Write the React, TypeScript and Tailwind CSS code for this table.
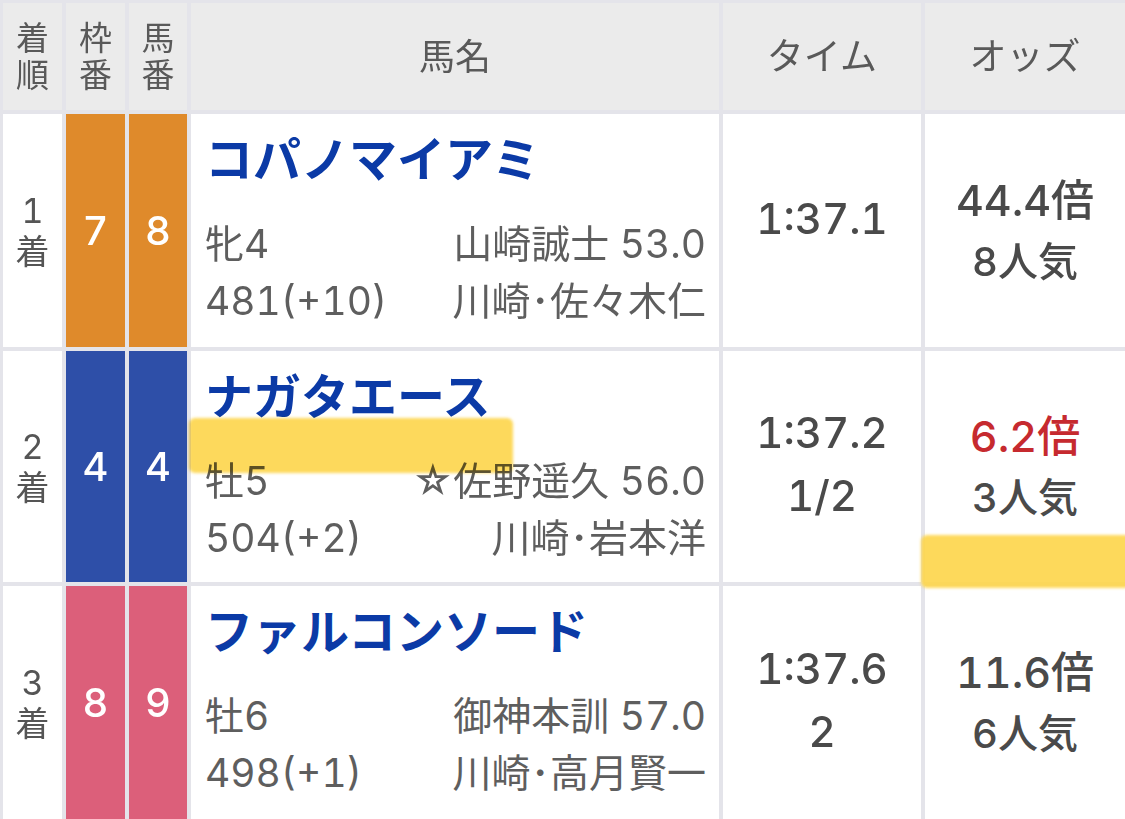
const rows = [
  {
    rank: "1",
    waku: "7",
    uma: "8",
    color: "bg-[#df8a2b]",
    name: "コパノマイアミ",
    sex: "牝4",
    jockey: "山崎誠士 53.0",
    weight: "481(+10)",
    trainer: "川崎･佐々木仁",
    time: "1:37.1",
    margin: "",
    odds: "44.4倍",
    pop: "8人気",
    fav: false,
    h: "h-[233px]",
  },
  {
    rank: "2",
    waku: "4",
    uma: "4",
    color: "bg-[#2e4fa8]",
    name: "ナガタエース",
    sex: "牡5",
    jockey: "☆佐野遥久 56.0",
    weight: "504(+2)",
    trainer: "川崎･岩本洋",
    time: "1:37.2",
    margin: "1/2",
    odds: "6.2倍",
    pop: "3人気",
    fav: true,
    h: "h-[231px]",
  },
  {
    rank: "3",
    waku: "8",
    uma: "9",
    color: "bg-[#dc5f7a]",
    name: "ファルコンソード",
    sex: "牡6",
    jockey: "御神本訓 57.0",
    weight: "498(+1)",
    trainer: "川崎･高月賢一",
    time: "1:37.6",
    margin: "2",
    odds: "11.6倍",
    pop: "6人気",
    fav: false,
    h: "h-[233px]",
  },
];

const font = "font-['Inter','Noto_Sans_CJK_JP',sans-serif] tabular-nums";

export default function App() {
  return (
    <div className={`w-[1125px] h-[819px] overflow-hidden bg-[#e4e4ea] pt-[3px] pl-[3px] ${font}`}>
      <div className="grid grid-cols-[59px_59px_58px_528px_198px_1fr] gap-[4px]">
        {/* ヘッダー */}
        <div className="h-[107px] bg-[#ebebeb] flex flex-col items-center justify-center text-[33px] leading-[37px] text-[#595959]">
          <span>着</span>
          <span>順</span>
        </div>
        <div className="h-[107px] bg-[#ebebeb] flex flex-col items-center justify-center text-[33px] leading-[37px] text-[#595959]">
          <span>枠</span>
          <span>番</span>
        </div>
        <div className="h-[107px] bg-[#ebebeb] flex flex-col items-center justify-center text-[33px] leading-[37px] text-[#595959]">
          <span>馬</span>
          <span>番</span>
        </div>
        <div className="h-[107px] bg-[#ebebeb] flex items-center justify-center text-[36px] text-[#595959]">馬名</div>
        <div className="h-[107px] bg-[#ebebeb] flex items-center justify-center text-[37px] text-[#595959]">タイム</div>
        <div className="h-[107px] bg-[#ebebeb] flex items-center justify-center text-[37px] text-[#595959]">オッズ</div>

        {rows.map((r) => (
          <Row key={r.rank} r={r} />
        ))}
      </div>
    </div>
  );
}

function Row({ r }: { r: (typeof rows)[number] }) {
  return (
    <>
      {/* 着順 */}
      <div className={`${r.h} bg-white flex flex-col items-center justify-center text-[34px] leading-[41px] text-[#555]`}>
        <span>{r.rank}</span>
        <span>着</span>
      </div>
      {/* 枠番・馬番 */}
      <div className={`${r.h} ${r.color} flex items-center justify-center text-[40px] font-medium text-white`}>{r.waku}</div>
      <div className={`${r.h} ${r.color} flex items-center justify-center text-[40px] font-medium text-white`}>{r.uma}</div>

      {/* 馬名 */}
      <div className={`${r.h} bg-white relative pt-[18px] pl-[14px] pr-[13px]`}>
        <div className="text-[48px] leading-[56px] font-bold text-[#0b3aa6] whitespace-nowrap">{r.name}</div>
        <div className="mt-[27px] flex justify-between text-[39px] leading-[57px] text-[#5e5e5e] whitespace-nowrap">
          <span>{r.sex}</span>
          <span>{r.jockey}</span>
        </div>
        <div className="flex justify-between text-[39px] leading-[57px] text-[#5e5e5e] whitespace-nowrap">
          <span>{r.weight}</span>
          <span>{r.trainer}</span>
        </div>
        {r.fav && (
          <div className="absolute left-[-2px] top-[67px] w-[324px] h-[55px] rounded-[6px] bg-[#fdd54a] opacity-90 blur-[1.5px] mix-blend-multiply" />
        )}
      </div>

      {/* タイム */}
      <div
        className={`${r.h} bg-white flex flex-col items-center justify-center text-[42px] leading-[63px] font-medium text-[#4a4a4a] ${
          r.margin ? "pb-[6px]" : "pb-[24px]"
        }`}
      >
        <span>{r.time}</span>
        {r.margin && <span>{r.margin}</span>}
      </div>

      {/* オッズ */}
      <div className={`${r.h} bg-white relative flex flex-col items-center justify-center leading-[62px] font-medium`}>
        <span className={`text-[43px] ${r.fav ? "text-[#c62a2f]" : "text-[#4a4a4a]"}`}>{r.odds}</span>
        <span className="text-[40px] text-[#4a4a4a]">{r.pop}</span>
        {r.fav && (
          <div className="absolute left-[-4px] top-[184px] w-[210px] h-[53px] rounded-[6px] bg-[#fdd54a] opacity-90 blur-[1.5px] z-10" />
        )}
      </div>
    </>
  );
}
